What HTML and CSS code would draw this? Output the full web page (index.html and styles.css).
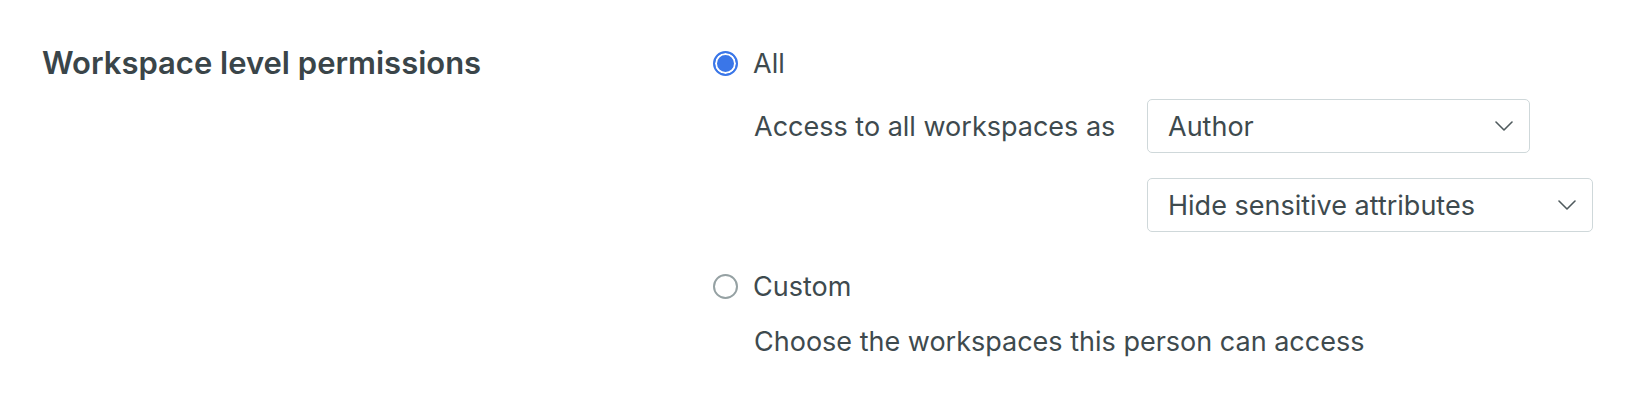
FILE: index.html
```html
<!DOCTYPE html>
<html lang="en">
<head>
  <meta charset="UTF-8">
  <meta name="viewport" content="width=device-width, initial-scale=1.0">
  <title>Workspace level permissions</title>
  <link rel="stylesheet" href="styles.css">
</head>
<body>
  <div class="setting">
    <div class="setting-label">Workspace level permissions</div>

    <div class="setting-options">
      <label class="option">
        <span class="radio checked"></span>
        <span>All</span>
      </label>
      <div class="option-body">
        <div class="select-row">
          <span class="select-label">Access to all workspaces as</span>
          <div class="select select-role">
            <span>Author</span>
            <svg class="chevron" viewBox="0 0 18 10" width="18" height="10"><path d="M1 1l8 8 8-8" fill="none" stroke="#4f5a5d" stroke-width="1.6" stroke-linecap="round" stroke-linejoin="round"/></svg>
          </div>
        </div>
        <div class="select-row">
          <span class="select-label"></span>
          <div class="select select-attrs">
            <span>Hide sensitive attributes</span>
            <svg class="chevron" viewBox="0 0 18 10" width="18" height="10"><path d="M1 1l8 8 8-8" fill="none" stroke="#4f5a5d" stroke-width="1.6" stroke-linecap="round" stroke-linejoin="round"/></svg>
          </div>
        </div>
      </div>

      <label class="option option-custom">
        <span class="radio"></span>
        <span>Custom</span>
      </label>
      <div class="option-body">
        <p class="hint">Choose the workspaces this person can access</p>
      </div>
    </div>
  </div>
</body>
</html>
```

FILE: styles.css
```css
body {
  margin: 0;
  background: #fff;
  color: #3e4a4e;
  font-family: "Inter", "Liberation Sans", sans-serif;
  font-size: 27px;
}
.setting {
  display: flex;
  padding: 43px 0 0 42px;
}
.setting-label {
  width: 671px;
  height: 40px;
  line-height: 40px;
  font-size: 31px;
  font-weight: 600;
  color: #3a4549;
}
.setting-options {
  display: flex;
  flex-direction: column;
}
.option {
  display: flex;
  align-items: center;
  gap: 15px;
  height: 40px;
}
.option-custom {
  margin-top: 34px;
}
.radio {
  box-sizing: border-box;
  width: 25px;
  height: 25px;
  border-radius: 50%;
  border: 2px solid #95a1a3;
  background: #fff;
}
.radio.checked {
  border-color: #3a76e8;
  background: #3a76e8;
  box-shadow: inset 0 0 0 2px #fff;
}
.option-body {
  padding-left: 41px;
}
.select-row {
  display: flex;
  align-items: center;
  margin-top: 16px;
}
.select-row + .select-row {
  margin-top: 25px;
}
.select-label {
  width: 393px;
}
.select {
  box-sizing: border-box;
  display: flex;
  align-items: center;
  justify-content: space-between;
  height: 54px;
  padding: 0 16px 0 20px;
  border: 1.5px solid #cfd8da;
  border-radius: 5px;
}
.select-role {
  width: 383px;
}
.select-attrs {
  width: 446px;
}
.hint {
  margin: 21px 0 0;
  line-height: 30px;
}
```
